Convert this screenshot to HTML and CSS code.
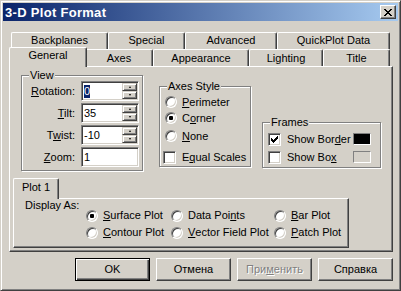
FILE: index.html
```html
<!DOCTYPE html>
<html lang="ru">
<head>
    <meta charset="UTF-8">
    <title>3-D Plot Format</title>
    <link rel="stylesheet" href="styles.css">
</head>
<body>
    <div class="window">
        <div class="titlebar">
            <span class="title">3-D Plot Format</span>
            <button class="close">
                <svg width="8" height="7" viewBox="0 0 8 7"><path d="M0 0h2v1h-2zM6 0h2v1h-2zM1 1h2v1h-2zM5 1h2v1h-2zM2 2h4v1h-4zM3 3h2v1h-2zM2 4h4v1h-4zM1 5h2v1h-2zM5 5h2v1h-2zM0 6h2v1h-2zM6 6h2v1h-2z" fill="#000"/></svg>
            </button>
        </div>

        <div class="content">
            <div class="tab-row back">
                <div class="tab w-backplanes">Backplanes</div>
                <div class="tab w-special">Special</div>
                <div class="tab w-advanced">Advanced</div>
                <div class="tab w-quickplot">QuickPlot Data</div>
            </div>
            <div class="tab-row front">
                <div class="tab active w-general">General</div>
                <div class="tab w-axes">Axes</div>
                <div class="tab w-appearance">Appearance</div>
                <div class="tab w-lighting">Lighting</div>
                <div class="tab w-title">Title</div>
            </div>

            <div class="panel">
                <div class="top">
                    <div class="group view">
                        <span class="group-label">View</span>
                        <label class="lbl"><u>R</u>otation:</label>
                        <div class="field">
                            <span class="sel">0</span>
                            <div class="spin"><span class="spin-btn"><i class="up"></i></span><span class="spin-btn"><i class="down"></i></span></div>
                        </div>
                        <label class="lbl"><u>T</u>ilt:</label>
                        <div class="field">
                            <span>35</span>
                            <div class="spin"><span class="spin-btn"><i class="up"></i></span><span class="spin-btn"><i class="down"></i></span></div>
                        </div>
                        <label class="lbl">T<u>w</u>ist:</label>
                        <div class="field">
                            <span>-10</span>
                            <div class="spin"><span class="spin-btn"><i class="up"></i></span><span class="spin-btn"><i class="down"></i></span></div>
                        </div>
                        <label class="lbl"><u>Z</u>oom:</label>
                        <div class="field"><span>1</span></div>
                    </div>

                    <div class="group axes">
                        <span class="group-label">Axes Style</span>
                        <div class="opt"><span class="radio"></span><u>P</u>erimeter</div>
                        <div class="opt"><span class="radio on"></span>C<u>o</u>rner</div>
                        <div class="opt gap2"><span class="radio"></span><u>N</u>one</div>
                        <div class="opt gap5"><span class="check"></span>E<u>q</u>ual Scales</div>
                    </div>

                    <div class="group frames">
                        <span class="group-label">Frames</span>
                        <div class="opt">
                            <span class="check"><svg width="7" height="7" viewBox="0 0 7 7"><path d="M6 0h1v1h-1zM5 1h2v1h-2zM0 2h1v1h-1zM4 2h3v1h-3zM0 3h2v1h-2zM3 3h3v1h-3zM0 4h5v1h-5zM1 5h3v1h-3zM2 6h1v1h-1z" fill="#000"/></svg></span>
                            Show Bor<u>d</u>er
                            <span class="swatch black"></span>
                        </div>
                        <div class="opt gap2">
                            <span class="check"></span>
                            Show Bo<u>x</u>
                            <span class="swatch"></span>
                        </div>
                    </div>
                </div>

                <div class="subtabs">
                    <div class="subtab">Plot 1</div>
                </div>
                <div class="subpanel">
                    <span class="display-as">Display As:</span>
                    <div class="opt"><span class="radio on"></span><u>S</u>urface Plot</div>
                    <div class="opt"><span class="radio"></span>Data Poi<u>n</u>ts</div>
                    <div class="opt"><span class="radio"></span><u>B</u>ar Plot</div>
                    <div class="opt"><span class="radio"></span><u>C</u>ontour Plot</div>
                    <div class="opt"><span class="radio"></span><u>V</u>ector Field Plot</div>
                    <div class="opt"><span class="radio"></span><u>P</u>atch Plot</div>
                </div>
            </div>

            <div class="buttons">
                <button class="btn default">OK</button>
                <button class="btn">Отмена</button>
                <button class="btn" disabled>При<u>м</u>енить</button>
                <button class="btn">Справка</button>
            </div>
        </div>
    </div>
</body>
</html>
```

FILE: styles.css
```css
* {
    box-sizing: border-box;
    margin: 0;
    padding: 0;
}

body {
    background: #d4d0c8;
    font-family: "Liberation Sans", Arial, sans-serif;
    font-size: 11px;
    line-height: 13px;
    color: #000;
}

.window {
    width: 401px;
    height: 291px;
    padding: 2px;
    background: #d4d0c8;
    border: 1px solid;
    border-color: #d4d0c8 #404040 #404040 #d4d0c8;
    box-shadow: inset 1px 1px #fff, inset -1px -1px #808080;
}

/* title bar */
.titlebar {
    height: 18px;
    display: flex;
    align-items: center;
    padding-left: 2px;
    background: linear-gradient(to right, #0a246a, #a6caf0);
    color: #fff;
    font-size: 13px;
    font-weight: bold;
    letter-spacing: 0.3px;
}

.titlebar .title {
    flex: 1;
}

.close {
    width: 16px;
    height: 14px;
    margin-right: 2px;
    display: flex;
    align-items: center;
    justify-content: center;
    background: #d4d0c8;
    border: 1px solid;
    border-color: #fff #404040 #404040 #fff;
    box-shadow: inset -1px -1px #808080;
}

.content {
    padding: 11px 5px 0 6px;
}

/* tabs */
.tab-row {
    display: flex;
    height: 17px;
    margin-left: 2px;
}

.tab {
    height: 17px;
    background: #d4d0c8;
    border-top: 1px solid #fff;
    border-left: 1px solid #fff;
    border-right: 1px solid #404040;
    border-radius: 2px 2px 0 0;
    box-shadow: inset -1px 0 #808080;
    text-align: center;
    line-height: 15px;
}

.tab-row.front .tab {
    padding-top: 1px;
}

.tab-row.front .tab.active {
    position: relative;
    z-index: 1;
    height: 20px;
    margin: -2px -2px -1px;
    padding-top: 0;
}

.w-backplanes { width: 97px; }
.w-special { width: 77px; }
.w-advanced { width: 92px; }
.w-quickplot { width: 113px; }
.w-general { width: 78px; }
.w-axes { width: 68px; }
.w-appearance { width: 96px; }
.w-lighting { width: 74px; }
.w-title { width: 67px; }

.panel {
    height: 186px;
    border: 1px solid;
    border-color: #fff #404040 #404040 #fff;
    box-shadow: inset -1px -1px #808080;
}

.top {
    display: flex;
    align-items: flex-start;
    padding-left: 11px;
}

/* group boxes */
.group {
    position: relative;
    border: 1px solid #808080;
    box-shadow: inset 1px 1px #fff, 1px 1px #fff;
}

.group-label {
    position: absolute;
    top: -7px;
    left: 7px;
    padding: 0 1px;
    background: #d4d0c8;
}

.view {
    width: 122px;
    height: 96px;
    margin-top: 8px;
    padding: 5px 0 0 1px;
    display: grid;
    grid-template-columns: 52px 58px;
    grid-auto-rows: 20px;
    column-gap: 6px;
    row-gap: 2px;
    align-items: center;
    align-content: start;
}

.lbl {
    text-align: right;
}

.field {
    height: 20px;
    display: flex;
    align-items: center;
    padding-left: 2px;
    background: #fff;
    border: 1px solid;
    border-color: #808080 #fff #fff #808080;
    box-shadow: inset 1px 1px #404040, inset -1px -1px #d4d0c8;
}

.sel {
    background: #0a246a;
    color: #fff;
}

.spin {
    width: 15px;
    height: 16px;
    margin-left: auto;
    margin-right: 1px;
    display: flex;
    flex-direction: column;
}

.spin-btn {
    flex: 1;
    display: flex;
    align-items: center;
    justify-content: center;
    background: #d4d0c8;
    border: 1px solid;
    border-color: #d4d0c8 #404040 #404040 #d4d0c8;
    box-shadow: inset 1px 1px #fff, inset -1px -1px #808080;
}

.spin-btn i {
    width: 1px;
    height: 0;
    border-left: 1px solid transparent;
    border-right: 1px solid transparent;
}

.spin-btn .up {
    border-bottom: 2px solid #000;
}

.spin-btn .down {
    border-top: 2px solid #000;
}

.axes {
    width: 92px;
    height: 81px;
    margin: 19px 0 0 16px;
    padding: 7px 0 0 5px;
}

.frames {
    width: 119px;
    height: 46px;
    margin: 55px 0 0 11px;
    padding: 8px 9px 0 5px;
}

.opt {
    display: flex;
    align-items: center;
    height: 16px;
    white-space: nowrap;
}

.gap2 { margin-top: 2px; }
.gap5 { margin-top: 5px; }

.radio {
    position: relative;
    flex: none;
    width: 12px;
    height: 12px;
    margin-right: 5px;
    border-radius: 50%;
    background: #fff;
    border: 1px solid;
    border-color: #808080 #fff #fff #808080;
    box-shadow: inset 1px 1px #404040, inset -1px -1px #d4d0c8;
}

.radio.on::after {
    content: "";
    position: absolute;
    left: 3px;
    top: 3px;
    width: 4px;
    height: 4px;
    border-radius: 1px;
    background: #000;
}

.check {
    flex: none;
    width: 13px;
    height: 13px;
    margin-right: 6px;
    padding: 2px 0 0 2px;
    background: #fff;
    border: 1px solid;
    border-color: #808080 #fff #fff #808080;
    box-shadow: inset 1px 1px #404040, inset -1px -1px #d4d0c8;
}

.check svg {
    display: block;
}

.axes .check {
    margin-left: -2px;
}

.swatch {
    width: 18px;
    height: 12px;
    margin-left: auto;
    border: 1px solid;
    border-color: #808080 #fff #fff #808080;
}

.swatch.black {
    background: #000;
}

/* inner tab control */
.subtabs {
    display: flex;
    height: 20px;
    margin: 7px 0 0 3px;
}

.subtab {
    position: relative;
    z-index: 1;
    width: 46px;
    height: 21px;
    background: #d4d0c8;
    border-top: 1px solid #fff;
    border-left: 1px solid #fff;
    border-right: 1px solid #404040;
    border-radius: 2px 2px 0 0;
    box-shadow: inset -1px 0 #808080;
    text-align: center;
    line-height: 17px;
}

.subpanel {
    width: 336px;
    height: 50px;
    margin-left: 3px;
    padding: 8px 0 0 11px;
    display: grid;
    grid-template-columns: 61px 85px 103px auto;
    grid-template-rows: 17px 17px;
    align-items: center;
    border: 1px solid;
    border-color: #fff #404040 #404040 #fff;
    box-shadow: inset -1px -1px #808080;
}

.display-as {
    grid-row: 1 / span 2;
    align-self: start;
    margin-top: -8px;
}

/* buttons */
.buttons {
    display: flex;
    justify-content: flex-end;
    gap: 6px;
    margin-top: 6px;
}

.btn {
    width: 75px;
    height: 23px;
    font: inherit;
    color: #000;
    background: #d4d0c8;
    border: 1px solid;
    border-color: #fff #404040 #404040 #fff;
    box-shadow: inset -1px -1px #808080;
}

.btn.default {
    border-color: #000;
    box-shadow: inset 1px 1px #fff, inset -1px -1px #404040, inset -2px -2px #808080;
}

.btn:disabled {
    color: #808080;
    text-shadow: 1px 1px #fff;
}
```
